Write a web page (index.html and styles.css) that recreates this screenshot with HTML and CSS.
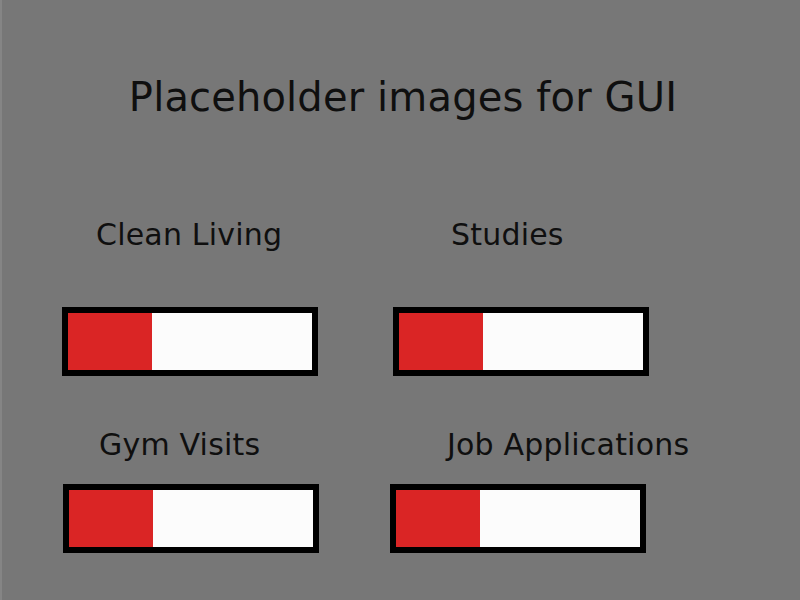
FILE: index.html
```html
<!DOCTYPE html>
<html lang="en">
<head>
    <meta charset="UTF-8">
    <meta name="viewport" content="width=device-width, initial-scale=1.0">
    <title>Placeholder images for GUI</title>
    <link rel="stylesheet" href="styles.css">
</head>
<body>
    <h1 class="title">Placeholder images for GUI</h1>

    <main class="board">
        <div class="row row-labels row-first">
            <span class="label label-clean">Clean Living</span>
            <span class="label label-studies">Studies</span>
        </div>
        <div class="row row-bars row-first-bars">
            <div class="meter meter-clean"><div class="meter-fill" style="width: 84px"></div></div>
            <div class="meter meter-studies"><div class="meter-fill" style="width: 84px"></div></div>
        </div>

        <div class="row row-labels row-second">
            <span class="label label-gym">Gym Visits</span>
            <span class="label label-jobs">Job Applications</span>
        </div>
        <div class="row row-bars row-second-bars">
            <div class="meter meter-gym"><div class="meter-fill" style="width: 84px"></div></div>
            <div class="meter meter-jobs"><div class="meter-fill" style="width: 84px"></div></div>
        </div>
    </main>
</body>
</html>
```

FILE: styles.css
```css
:root {
    --bg-color: #777777;
    --text-color: #0f0f0f;
    --fill-color: #da2525;
    --track-color: #fcfcfc;
}

* {
    margin: 0;
    padding: 0;
    box-sizing: border-box;
}

html, body {
    height: 100%;
}

body {
    background-color: var(--bg-color);
    border-left: 2px solid #858585;
    color: var(--text-color);
    font-family: 'DejaVu Sans', Verdana, sans-serif;
    padding-top: 73px;
}

.title {
    font-size: 40px;
    font-weight: normal;
    line-height: 48px;
    text-align: center;
    margin-left: 4px;
    letter-spacing: 0.15px;
}

.board {
    padding-left: 60px;
}

.row {
    display: grid;
    grid-template-columns: 328px 1fr;
}

.row-first {
    margin-top: 97px;
}

.row-first-bars {
    margin-top: 55px;
}

.row-second {
    margin-top: 52px;
}

.row-second-bars {
    margin-top: 22px;
}

.label {
    font-size: 30px;
    line-height: 34px;
    letter-spacing: 0.2px;
    white-space: nowrap;
}

.label-clean { margin-left: 34px; }
.label-studies { margin-left: 61px; }
.label-gym { margin-left: 37px; }
.label-jobs { margin-left: 57px; }

.meter {
    width: 256px;
    height: 69px;
    border: 6px solid #000;
    background: var(--track-color);
    display: flex;
}

.meter-fill {
    height: 100%;
    background: var(--fill-color);
}

.meter-clean { margin-left: 0; }
.meter-studies { margin-left: 3px; }
.meter-gym { margin-left: 1px; }
.meter-jobs { margin-left: 0; }
```
